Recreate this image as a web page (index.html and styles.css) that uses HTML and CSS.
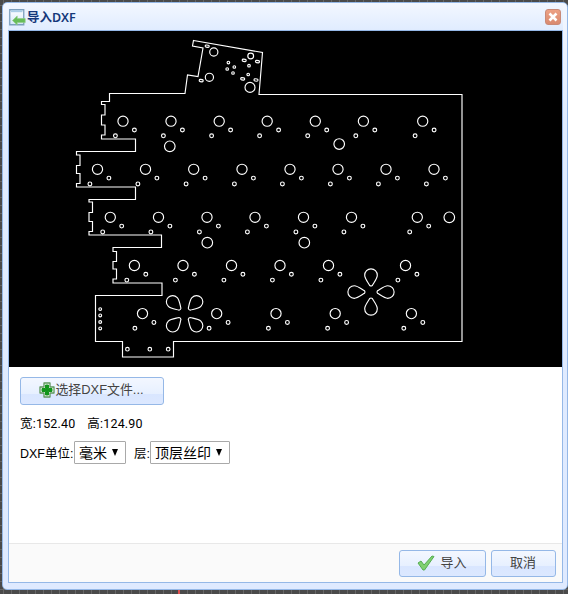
FILE: index.html
```html
<!DOCTYPE html>
<html lang="zh">
<head>
<meta charset="utf-8">
<title>导入DXF</title>
<link rel="stylesheet" href="styles.css">
</head>
<body>
<section class="window">
  <header class="titlebar">
    <svg class="title-icon" viewBox="0 0 17 17"><defs><linearGradient id="pg" x2="0" y2="1"><stop stop-color="#fff"/><stop offset="1" stop-color="#d4e8fa"/></linearGradient></defs><path d="M.75.75h14v15h-14z" fill="url(#pg)" stroke="#7d9fbd" stroke-width="1.3"/><path d="M2 2.2h11.500" stroke="#aacde7" stroke-width="2"/><path d="M3.500 11.500l4.700-4.500v2.600h8v4H8.200V16z" fill="#67bd58" stroke="#92cd86" stroke-width=".7"/></svg>
    <h1>导入<span>DXF</span></h1>
    <button class="close" aria-label="关闭"><svg viewBox="0 0 14 14"><path d="M3.500 3.500l7 7m0-7l-7 7" stroke="#fff" stroke-width="2.6"/></svg></button>
  </header>
  <main class="body">
    <svg class="board" viewBox="9 31 553 336">
      <path d="M193.500 40.500L262.500 52.500 259 94.500H462V341.500H173.500V357H122.500V341.500H95.500V295.500H162V283H113V279H116.500V269H113V261.500H116.500V251.500H113V247.500H161.500V235H89V231.500H92.500V221.500H89V212.500H92.500V202H89V199.500H135.500V187H76.500V183.500H80V173.500H76.500V165.500H80V155H76.500V151.500H135.500V139H101.500V135H105V125H101.500V115H105V104.500H101.500V101.500H109.500V93.500H185L187.500 75 198 76.500 203 48 192.500 46z"/>
      <g id="keys"></g>
      <g id="holes"></g>
      <g id="slots"></g>
      <g id="petals"></g>
    </svg>
    <div class="form">
      <button class="btn choose"><svg class="plus" viewBox="0 0 16 16"><path d="M5 1h6v4h4v6h-4v4H5v-4H1V5h4z" fill="#fff" stroke="#5d965d" stroke-width="1.3" stroke-linejoin="round"/><path d="M6.500 3h3v3.500H13v3H9.500V13h-3V9.500H3v-3h3.500z" fill="#12951b" stroke="#12951b"/></svg><span>选择DXF文件...</span></button>
      <div class="size"><span>宽:<b>152.40</b></span><span>高:<b>124.90</b></span></div>
      <div class="options"><span class="label">DXF单位:</span><span class="select unit"><span>毫米</span><i></i></span><span class="layer">层:</span><span class="select top"><span>顶层丝印</span><i></i></span></div>
    </div>
    <footer class="actions">
      <button class="btn import"><svg class="check" viewBox="0 0 18 16"><path d="M1 8l3-2 3 4 8-9 2 .5L7.500 15H6z" fill="#7fd070" stroke="#55ad52" stroke-linejoin="round"/></svg><span>导入</span></button>
      <button class="btn cancel"><span>取消</span></button>
    </footer>
  </main>
</section>
<div class="mark"></div>
<script src="board.js"></script>
</body>
</html>
```
FILE: styles.css
```css
* { box-sizing: border-box; }
body {
  margin: 0; height: 594px; padding: 2px 0 0 2px; overflow: hidden;
  font: 13px "Liberation Sans", "Noto Sans CJK SC", sans-serif; color: #000;
  background-color: #4a4a4a;
  background-image: linear-gradient(90deg, #666 1px, transparent 1px), linear-gradient(#666 1px, transparent 1px);
  background-size: 8px 8px; background-position: 3px 5px;
}
.window {
  width: 566px; height: 588px; padding: 0 4px 6px 5px; display: flex; flex-direction: column;
  border: 1px solid #95b8e7; border-radius: 5px;
  background: linear-gradient(#f3f7ff 0, #e0ecff 20%, #dfeaff 100%);
}
.titlebar { height: 27px; flex: none; display: flex; align-items: center; padding: 2px 2px 0 1px; background: linear-gradient(#f3f7ff, #e0ecff); }
.title-icon { width: 17px; height: 17px; }
h1 { margin: 0 auto 0 1px; font-size: 12.5px; line-height: 18px; color: #15387a; }
h1 span { font-family: "Noto Sans", sans-serif; font-weight: 600; font-size: 12.5px; }
.close { width: 16px; height: 16px; margin-top: -2px; padding: 0; border: 1px solid #c98a78; border-radius: 3px; background: linear-gradient(#eda184, #d98a70); }
.close svg { display: block; width: 14px; height: 14px; }
.body { flex: 1; display: flex; flex-direction: column; border: 1px solid #95b8e7; background: #fff; }
.board { width: 553px; height: 336px; flex: none; background: #000; fill: none; stroke: #fff; stroke-width: 1.15; }
.form { flex: 1; padding: 10px 11px; }
.btn {
  display: flex; align-items: center; justify-content: center; padding: 0 1px 2px 0;
  height: 28px; border: 1px solid #95b8e7; border-radius: 3px; color: #444;
  font: 13px "Liberation Sans", "Noto Sans CJK SC", sans-serif;
  background: linear-gradient(#f3f7ff 0, #e7f0ff 60%, #d9e6ff 61%, #dce8ff 100%);
}
.btn span { margin-top: -3px; }
.choose { width: 144px; }
.choose span { font-size: 12.9px; }
.plus { width: 16px; height: 16px; }
.size { display: flex; gap: 12px; margin-top: 9px; line-height: 20px; font-size: 12.5px; }
.size b { font: 12.5px Roboto, sans-serif; letter-spacing: .15px; }
.options { display: flex; align-items: center; height: 23px; margin-top: 7px; font-size: 12.5px; }
.label { width: 54px; white-space: nowrap; }
.select { height: 23px; display: flex; align-items: center; justify-content: space-between; padding: 0 7px 1px 4px; border: 1px solid #a9a9a9; border-radius: 1px; font-size: 14px; }
.select i { border: 3.5px solid transparent; border-top: 7px solid #000; border-bottom: 0; }
.unit { width: 52px; }
.top { width: 80px; }
.layer { width: 16px; margin-left: 8px; }
.actions { height: 39px; flex: none; display: flex; justify-content: flex-end; gap: 5px; padding: 6px; border-top: 1px solid #e8e8e8; background: #fafafa; }
.actions .btn { height: 27px; }
.import { width: 87px; gap: 5px; }
.check { width: 18px; height: 16px; }
.cancel { width: 65px; }
.mark { width: 2px; height: 4px; margin-left: 176px; background: #e05050; }
```
FILE: board.js
```js
const put = (id, tag, attrs) => {
  const e = document.createElementNS("http://www.w3.org/2000/svg", tag);
  for (const k in attrs) e.setAttribute(k, attrs[k]);
  document.getElementById(id).append(e);
};
const circle = (id, cx, cy, r) => put(id, "circle", { cx, cy, r });
const rows = [
  [121.2, [123, 171, 219.2, 267.2, 315.3, 363.4, 422.7]],
  [169.3, [97.5, 145.5, 193.7, 242, 290, 338, 386, 434]],
  [217.3, [110.3, 158.5, 207, 255, 303.5, 351.5, 417.3]],
  [265.5, [134.4, 183, 231.5, 280, 328.5, 405.5]],
  [313.6, [142.5, 216.7, 276, 335.2, 411.4]]
];
for (const [y, xs] of rows) for (const x of xs) {
  circle("keys", x, y, 5.1);
  circle("keys", x + 11.4, y + 8.8, 1.9);
  circle("keys", x - 7.6, y + 14.6, 1.9);
}
[[169.8, 146.3, 5.3], [339.2, 144, 5.3], [207.3, 242.7, 5.3], [304.3, 242.7, 5.3], [449.3, 217.3, 5.3],
 [213.8, 52, 4.1], [209.4, 77.3, 4.1], [250.7, 56, 2.9], [250, 87.4, 5],
 [228.4, 62.5, 1.3], [227.2, 69, 1.3], [234.3, 67, 1.3], [233, 73, 1.3], [249, 65.7, 1.3], [248.2, 74.5, 1.3],
 [100.2, 309.1, 1.4], [100.2, 315.4, 1.4], [100.2, 322, 1.4], [100.2, 328.4, 1.4],
 [127.4, 349.2, 1.8], [149.8, 349.2, 1.8], [168.2, 349.2, 1.8]].forEach(h => circle("holes", ...h));
[[207.2, 46.2], [201.2, 80.6], [244.2, 60.4], [257.5, 61.6], [242.7, 78.9], [256, 80]].forEach(([x, y]) =>
  put("slots", "rect", { x: x - 2, y: y - 1.1, width: 4, height: 2.2, rx: 1.1, transform: `rotate(8 ${x} ${y})` }));
const petal = "M-1.3-6.5C-3-9.5-6.3-13.5-6.3-16.7C-6.3-20.5-3.5-23.1 0-23.1S6.3-20.5 6.3-16.7C6.3-13.5 3-9.5 1.3-6.5Q0-5.5-1.3-6.5z";
for (const [x, y, start] of [[371, 292, 0], [184.6, 313.8, 45]])
  for (let i = 0; i < 4; i++) put("petals", "path", { d: petal, transform: `translate(${x} ${y}) rotate(${start + i * 90})` });
```
